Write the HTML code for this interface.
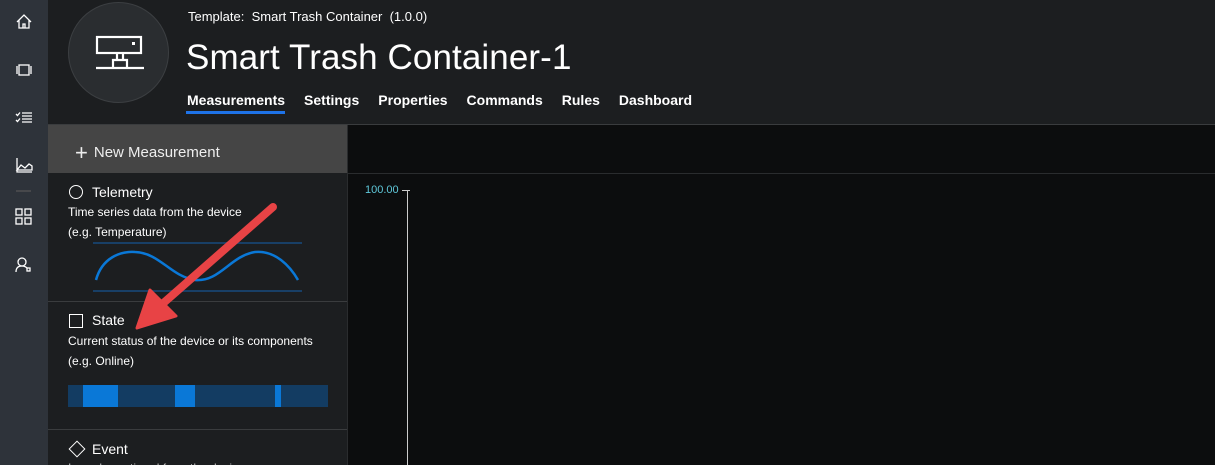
<!DOCTYPE html><html><head><style>
html,body{margin:0;width:1215px;height:465px;overflow:hidden}
body{background:#1c1e20;font-family:"Liberation Sans",sans-serif;color:#fff}
#w{position:relative;width:1215px;height:465px;overflow:hidden}
.a{position:absolute}
</style></head><body><div id="w">
<div class="a" style="left:0;top:0;width:48px;height:465px;background:#2e333a"></div>
<svg class="a" style="left:0;top:0" width="48" height="300" fill="none" stroke="#fff" stroke-width="1.3">
<path d="M17 22 L24 15 L31 22 M19 20 V28 H29 V20 M23 28 V24 H25 V28"/>
<rect x="19" y="65" width="10" height="10"/><path d="M17 66 V74 M31 66 V74"/>
<path d="M16 114 l1.5 1.5 l2.5-3 M16 120 l1.5 1.5 l2.5-3 M22 113 H32 M22 116 H32 M22 119 H32 M22 122 H32"/>
<path d="M17 158 V172 H32 M17 170 l4-5 l4 3 l4-4 l3 2 V170 Z"/>
<path d="M16 191 H31" stroke="#555"/>
<rect x="16" y="209" width="6" height="6"/><rect x="25" y="209" width="6" height="6"/><rect x="16" y="218" width="6" height="6"/><rect x="25" y="218" width="6" height="6"/>
<circle cx="22" cy="262" r="4"/><path d="M16 272 c0-5 3-6 6-6 c2 0 4 1 5 2"/><rect x="27" y="268" width="3" height="3"/>
</svg>
<div class="a" style="left:48px;top:124px;width:1167px;height:1px;background:#3a3c3e"></div>
<div class="a" style="left:68px;top:2px;width:99px;height:99px;border-radius:50%;background:#2a2d30;border:1px solid #3c3f42"></div>
<svg class="a" style="left:68px;top:2px" width="100" height="100" fill="none" stroke="#fff" stroke-width="2.2">
<rect x="29" y="35" width="44" height="16"/><rect x="64" y="40" width="3" height="3" fill="#fff" stroke="none"/>
<path d="M49 51 V58 H55 V51 M45 66 V58 H59 V66 Z M28 66 H76"/>
</svg>
<div class="a" style="left:188px;top:9px;font-size:13px">Template:&nbsp; Smart Trash Container&nbsp; (1.0.0)</div>
<div class="a" style="left:186px;top:38px;font-size:35px;letter-spacing:0.1px">Smart Trash Container-1</div>
<div class="a" style="left:187px;top:92px;font-size:14px;font-weight:bold;white-space:nowrap">
<span>Measurements</span><span style="margin-left:19px">Settings</span><span style="margin-left:19px">Properties</span><span style="margin-left:19px">Commands</span><span style="margin-left:19px">Rules</span><span style="margin-left:19px">Dashboard</span></div>
<div class="a" style="left:186px;top:111px;width:99px;height:3px;background:#1e73e8"></div>
<div class="a" style="left:48px;top:125px;width:300px;height:48px;background:#454545"></div>
<div class="a" style="left:75px;top:140px;font-size:15px;font-weight:300;color:#eee"><span style="font-size:22px;vertical-align:-3px;margin-right:6px">+</span>New Measurement</div>
<div class="a" style="left:348px;top:125px;width:867px;height:340px;background:#0c0d0e"></div>
<div class="a" style="left:348px;top:173px;width:867px;height:1px;background:#2a2c2e"></div>
<div class="a" style="left:347px;top:125px;width:1px;height:340px;background:#2a2c2e"></div>
<div class="a" style="left:365px;top:184px;font-size:11px;color:#5fc7d9">100.00</div>
<div class="a" style="left:402px;top:190px;width:8px;height:1px;background:#ccc"></div>
<div class="a" style="left:407px;top:190px;width:1px;height:275px;background:#ccc"></div>
<div class="a" style="left:48px;top:301px;width:299px;height:1px;background:#3a3c3e"></div>
<div class="a" style="left:48px;top:429px;width:299px;height:1px;background:#3a3c3e"></div>
<div class="a" style="left:69px;top:185px;width:12px;height:12px;border:1.5px solid #fff;border-radius:50%"></div>
<div class="a" style="left:92px;top:184px;font-size:14px">Telemetry</div>
<div class="a" style="left:68px;top:202px;font-size:12px;line-height:20px">Time series data from the device<br>(e.g. Temperature)</div>
<svg class="a" style="left:90px;top:238px" width="220" height="60" fill="none">
<path d="M3 5 H212 M3 53 H212" stroke="#183f66" stroke-width="2"/>
<path d="M6 42 C12 20 30 13 45 14 C70 15 80 38 105 42 C130 44 140 18 165 14 C185 12 200 28 208 42" stroke="#0a78d7" stroke-width="2.5"/>
</svg>
<div class="a" style="left:69px;top:314px;width:12px;height:12px;border:1.5px solid #fff"></div>
<div class="a" style="left:92px;top:312px;font-size:14px">State</div>
<div class="a" style="left:68px;top:331px;font-size:12px;line-height:20px">Current status of the device or its components<br>(e.g. Online)</div>
<div class="a" style="left:68px;top:385px;width:260px;height:22px;background:#133c62"></div>
<div class="a" style="left:83px;top:385px;width:35px;height:22px;background:#0a78d7"></div>
<div class="a" style="left:175px;top:385px;width:20px;height:22px;background:#0a78d7"></div>
<div class="a" style="left:275px;top:385px;width:6px;height:22px;background:#0a78d7"></div>
<div class="a" style="left:71px;top:443px;width:10px;height:10px;border:1.5px solid #fff;transform:rotate(45deg)"></div>
<div class="a" style="left:92px;top:441px;font-size:14px">Event</div>
<div class="a" style="left:68px;top:461px;font-size:12px;color:#bbb">Irregular or timed from the device</div>
<svg class="a" style="left:0;top:0" width="400" height="400">
<path d="M273 207 L160 306" stroke="#e84345" stroke-width="8" stroke-linecap="round"/>
<path d="M137 328 L150 290 L176 316 Z" fill="#e84345" stroke="#e84345" stroke-width="3" stroke-linejoin="round"/>
</svg>
</div></body></html>
